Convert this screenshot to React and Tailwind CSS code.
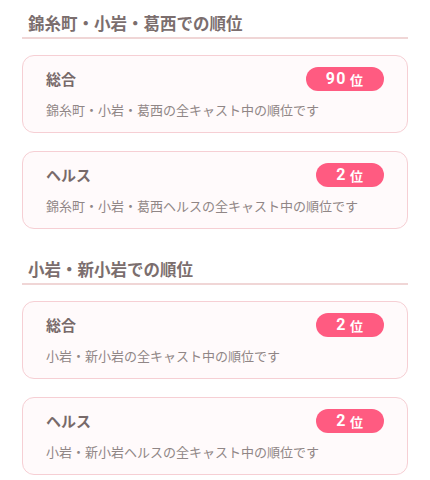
const sections = [
  {
    area: "錦糸町・小岩・葛西",
    items: [
      { label: "総合", rank: 90, note: "錦糸町・小岩・葛西の全キャスト中の順位です" },
      { label: "ヘルス", rank: 2, note: "錦糸町・小岩・葛西ヘルスの全キャスト中の順位です" },
    ],
  },
  {
    area: "小岩・新小岩",
    items: [
      { label: "総合", rank: 2, note: "小岩・新小岩の全キャスト中の順位です" },
      { label: "ヘルス", rank: 2, note: "小岩・新小岩ヘルスの全キャスト中の順位です" },
    ],
  },
];

function RankCard({ item }) {
  return (
    <div className="rounded-[12px] border border-[#f6cfd4] bg-[#fffafb] px-[23px] pt-[11px] pb-[12px]">
      <div className="flex h-[24px] items-center justify-between">
        <span className="text-[15px] font-bold leading-[24px] text-[#786a6a]">
          {item.label}
        </span>
        <span className="flex h-[24px] items-center rounded-full bg-[#ff5b81] pl-[20px] pr-[21px] text-white">
          <span className="font-['Roboto'] text-[16px] font-bold leading-none tracking-[1.5px]">
            {item.rank}
          </span>
          <span className="ml-[3px] text-[13px] font-bold leading-none">位</span>
        </span>
      </div>
      <div className="mt-[9px] text-[13px] leading-[20px] text-[#908686]">
        {item.note}
      </div>
    </div>
  );
}

export default function App() {
  return (
    <div className="bg-white px-[22px] pt-[11px] font-['Noto_Sans_CJK_JP',sans-serif]">
      {sections.map((section, i) => (
        <section key={section.area} className={i > 0 ? "mt-[28px]" : ""}>
          <h2 className="border-b-2 border-[#f0d6d6] pb-[2px] pl-[6px] text-[16.5px] font-bold leading-[24px] text-[#7b6e6e]">
            {section.area}での順位
          </h2>
          <div className="mt-[16px] flex flex-col gap-[18px]">
            {section.items.map((item) => (
              <RankCard key={item.label} item={item} />
            ))}
          </div>
        </section>
      ))}
    </div>
  );
}
